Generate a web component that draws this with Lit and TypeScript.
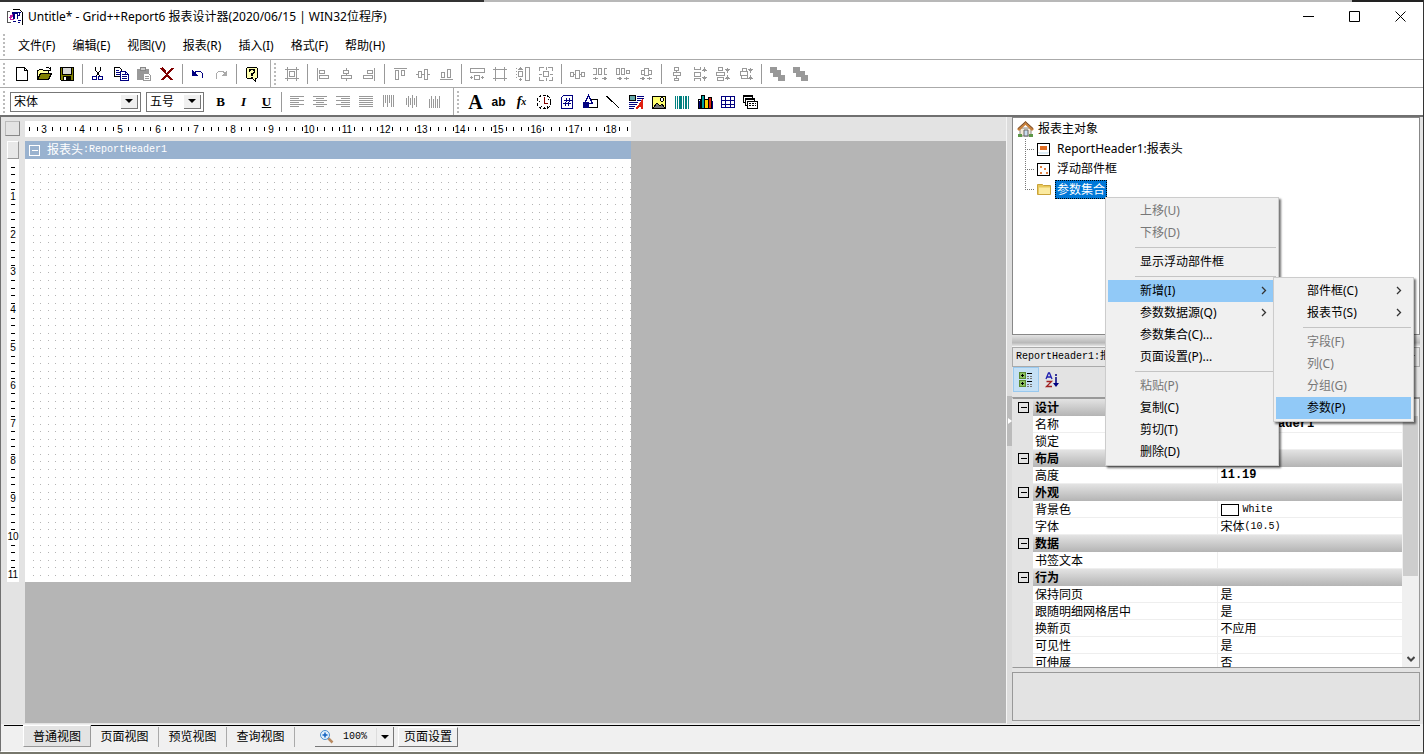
import { LitElement, html, svg, css, nothing } from "lit";
import type { SVGTemplateResult } from "lit";
import { customElement } from "lit/decorators.js";
import { classMap } from "lit/directives/class-map.js";

const CM = 37.8;
const STEP = CM / 5;
const PAGE_W = 606;
const PAGE_H = 423;
const RULER_START = 2.485;

const GREY = "#999";

/* ---------- toolbar glyphs, drawn on a 16 x 16 grid ---------- */

const strokes = (d: string, color = GREY, width = 1) =>
  svg`<path d=${d} fill="none" stroke=${color} stroke-width=${width} />`;
const solid = (d: string, color = GREY) => svg`<path d=${d} fill=${color} />`;

const glyphs: Record<string, SVGTemplateResult> = {
  new: svg`<path d="M3.5 1.5h8l3 3v10h-11z" fill="#fff" stroke="#000"/><path d="M11.5 1.5v3h3" fill="none" stroke="#000"/>`,
  open: svg`<path d="M1.5 13.5v-9h1l1-1h3l1 1h5v3" fill="#ffffa0" stroke="#000"/><path d="M1.5 13.5l3-6h11l-3 6z" fill="#808000" stroke="#000"/><path d="M9.5 2.5q2-2 4 0l1 1M14.5 1v3h-3" fill="none" stroke="#000"/>`,
  save: svg`<path d="M1.5 1.5h13v13h-12l-1-1z" fill="#808000" stroke="#000"/><path d="M4 2h8v6H4z" fill="#d8d8d8"/><path d="M4 10h8v4H4z" fill="#000"/><path d="M5 11h2v3H5z" fill="#fff"/><path d="M3.5 2v6h9V2" fill="none" stroke="#000"/>`,
  cut: svg`<path d="M5.5 1v3l4 6M10.5 1v3l-4 6" fill="none" stroke="#000"/><circle cx="4.500" cy="12" r="2" fill="none" stroke="#000080"/><circle cx="10.500" cy="12" r="2" fill="none" stroke="#000080"/>`,
  copy: svg`<path d="M1.500 1.500h5l2 2v7h-7z" fill="#fff" stroke="#000"/><path d="M3 4.500h3M3 6.500h4M3 8.500h4" stroke="#000080"/><path d="M7.500 5.500h5l3 3v6h-8z" fill="#fff" stroke="#000080"/><path d="M9 8.500h3M9 10.500h5M9 12.500h5M12.500 5.500v3h3" fill="none" stroke="#000080"/>`,
  paste: svg`<path d="M1 3h12v11H1z" fill="#999"/><path d="M4.500 1.500h5v3h-5z" fill="#ccc" stroke="#888"/><path d="M7.500 7.500h5l2 2v5h-7z" fill="#fff" stroke="#999"/><path d="M9 10.500h4M9 12.500h4" stroke="#999"/>`,
  del: svg`<path d="M2 2l11 12M14 2L3 14M3 2l4 4" fill="none" stroke="#800000" stroke-width="2"/>`,
  undo: svg`<path d="M3.500 8.500q2-4 6-3q5 1 2.500 7" fill="none" stroke="#000080"/><path d="M2 4v6h6z" fill="#000080"/>`,
  redo: svg`<path d="M12.500 8.500q-2-4-6-3q-5 1-2.500 7" fill="none" stroke="#aaa"/><path d="M14 4v6h-6z" fill="#aaa"/>`,
  help: svg`<path d="M2.500 2.500l1-1h9l1 1v9l-1 1h-1v3l-3-3h-5l-1-1z" fill="#ffffb0" stroke="#000"/><path d="M5.500 6V4.500l1-1h3l1 1V6L8 8v1.500" fill="none" stroke="#000" stroke-width="1.600"/><path d="M7 10.500h2v1.500H7z"/>`,
  gridAlign: svg`${strokes("M1 3.500h14M1 12.500h14M3.500 1v14M12.500 1v14")}${strokes("M5.500 5.500h5v5h-5z")}`,
  left: strokes("M2.500 2v13M4.500 4.500h5v3h-5zM4.500 9.500h9v3h-9z"),
  centre: strokes("M8.500 2v2M8.500 8v2M8.500 13v2M5.500 4.500h5v3h-5zM3.500 9.500h10v3h-10z"),
  right: strokes("M13.500 2v13M6.500 4.500h5v3h-5zM2.500 9.500h9v3h-9z"),
  top: strokes("M2 2.500h13M3.500 4.500h3v9h-3zM9.500 4.500h3v5h-3z"),
  middle: strokes("M1 8.500h2M7 8.500h2M13 8.500h2M3.500 5.500h3v6h-3zM9.500 3.500h3v10h-3z"),
  bottom: strokes("M2 13.500h13M3.500 6.500h3v5h-3zM9.500 3.500h3v8h-3z"),
  sameW: svg`${strokes("M1.500 2.500h14v4h-14zM5.500 9.500h5v4h-5zM1 11.500h3M12 11.500h3")}${solid("M1 11.500l2-2v4zM15 11.500l-2-2v4z")}`,
  sameBoth: strokes("M3.500 3.500h9v9h-9zM1 3.500h2M13 3.500h2M1 12.500h2M13 12.500h2M3.500 1v2M12.500 1v2M3.500 13v2M12.500 13v2"),
  sameH: svg`${strokes("M10.500 1.500h4v13h-4zM3.500 5.500h4v5h-4zM5.500 1v3M5.500 12v3")}${strokes("M1.500 2v1M1.500 5v1M1.500 8v1M1.500 11v1")}${solid("M3 3.500h5l-2.500-2zM3 12.500h5l-2.500 2z")}`,
  sameGrid: strokes("M5.500 5.500h5v5h-5zM1.500 5v-3.500h4M10 1.500h4.500v3.500M14.500 11v3.500h-4M6 14.500H1.500V11M8.500 1v3M8.500 12v3M1 8.500h3M12 8.500h3"),
  hEqual: strokes("M1.500 6.500h3v4h-3zM6.500 4.500h4v8h-4zM12.500 6.500h3v4h-3zM5 8.500h1M11 8.500h1"),
  hMore: svg`${strokes("M1 2.500h3v6H1M6.500 2.500h3v6h-3zM15 2.500h-3v6h3M2 12.500h4M10 12.500h4")}${solid("M1 12.500l3-2v4zM15 12.500l-3-2v4z")}`,
  hLess: svg`${strokes("M1.500 2.500h3v6h-3zM6.500 2.500h3v6h-3zM11.500 4.500h3v3h-3zM2 12.500h3M11 12.500h3")}${solid("M7 12.500l-3-2v4zM9 12.500l3-2v4z")}`,
  hNone: svg`${strokes("M3.500 4.500h3v4h-3zM6.500 2.500h4v7h-4zM10.500 4.500h3v4h-3zM2 12.500h3M11 12.500h3")}${solid("M7 12.500l-3-2v4zM9 12.500l3-2v4z")}`,
  vEqual: strokes("M5.500 1.500h4v3h-4zM4.500 6.500h7v3h-7zM5.500 12.500h4v2h-4zM7.500 5v1M7.500 10v2"),
  vMore: svg`${strokes("M2.500 1v2.500h6V1M2.500 6.500h6v4h-6zM2.500 15v-2.500h6V15M12.500 2v4M12.500 10v4")}${solid("M10 5h5l-2.500-4zM10 11h5l-2.500 4z")}`,
  vLess: svg`${strokes("M3.500 1.500h4v3h-4zM1.500 6.500h8v3h-8zM2.500 11.500h6v3h-6zM12.500 2v4M12.500 10v4")}${solid("M10 3h5l-2.500 4zM10 13h5l-2.500-4z")}`,
  vNone: svg`${strokes("M4.500 2.500h4v3h-4zM2.500 5.500h7v4h-7zM3.500 9.500h6v3h-6zM12.500 2v4M12.500 10v4")}${solid("M10 3h5l-2.500 4zM10 13h5l-2.500-4z")}`,
  front: svg`${solid("M1 1h7v6H1zM4 4h8v7H4zM9 9h7v6H9z")}`,
  back: svg`${solid("M1 1h7v6H1zM4 5h9v6H4zM9 9h7v6H9z")}`,
  tLeft: strokes("M1 2.500h14M1 4.500h9M1 6.500h14M1 8.500h9M1 10.500h14M1 12.500h9"),
  tCentre: strokes("M1 2.500h14M4 4.500h8M1 6.500h14M4 8.500h8M1 10.500h14M4 12.500h8"),
  tRight: strokes("M1 2.500h14M6 4.500h9M1 6.500h14M6 8.500h9M1 10.500h14M6 12.500h9"),
  tFull: strokes("M1 2.500h14M1 4.500h14M1 6.500h14M1 8.500h14M1 10.500h14M1 12.500h14"),
  vTop: strokes("M2.500 1v12M4.500 1v8M6.500 1v12M8.500 1v8M10.500 1v12M12.500 1v12"),
  vMiddle: strokes("M2.500 4v7M4.500 2v11M6.500 4v7M8.500 1v13M10.500 4v7M12.500 2v11"),
  vBottom: strokes("M2.500 5v9M4.500 2v12M6.500 5v9M8.500 2v12M10.500 5v9M12.500 2v12"),
  clock: svg`<circle cx="8" cy="8" r="7" fill="#fff" stroke="#000" stroke-dasharray="3 1.500"/><path d="M8 3v6h4" fill="none" stroke="#800000"/><path d="M3 7.500h1M12 5h1M8 13v1M4.500 12h1M11 12h1" stroke="#000"/>`,
  hash: svg`<path d="M4.500 1.500h9v13h-11v-11z" fill="#fff" stroke="#000080"/><path d="M6.500 12l1-8M9.500 12l1-8M4.500 6.500h8M4 9.500h8" stroke="#000080"/>`,
  shape: svg`<path d="M6.500 5.500h9v8h-9z" fill="#fff" stroke="#000"/><path d="M6.500 1.500l4 8h-8z" fill="#fff" stroke="#000080"/><circle cx="4" cy="11" r="3.500" fill="#000080"/>`,
  line: svg`<path d="M1.500 2l13 12.500" stroke="#000"/>`,
  rich: svg`<path d="M1.500 1.500h6v5h-6z" fill="#6aa" stroke="#000"/><path d="M9 2.500h7M9 4.500h7M9 6.500h5M1 8.500h9M1 10.500h8M1 12.500h6M1 14.500h5" stroke="#000080"/><path d="M8.500 15l5.500-8v8M10.500 12h4" fill="none" stroke="#e02010" stroke-width="1.700"/>`,
  picture: svg`<path d="M1.500 2.500h13v12h-13z" fill="#ffff70" stroke="#000"/><path d="M2 14l4-5 3 3 2-2 3 4z" fill="#777" stroke="#000"/><circle cx="11" cy="5.500" r="1.800" fill="#fff" stroke="#000"/>`,
  barcode: svg`<path d="M1.500 2v13M3.500 2v13M9.500 2v13M14.500 2v13" stroke="#008080" stroke-width="1"/><path d="M5 2h3v13H5zM11 2h2v13h-2z" fill="#008080"/>`,
  chart: svg`<path d="M1.500 5.500h2v9h-2z" fill="#fff" stroke="#000"/><path d="M4.500 1.500h3v13h-3z" fill="#00a0a0" stroke="#000"/><path d="M7.500 5.500h4v9h-4z" fill="#ffd400" stroke="#000"/><path d="M11.500 3.500h3v11h-3z" fill="#e02010" stroke="#000"/><path d="M15.500 7v8M2.500 7v7" stroke="#000080"/>`,
  table: svg`<path d="M1.500 2.500h13v11h-13zM1.500 6.500h13M1.500 10.500h13M5.500 2.500v11M10.500 2.500v11" fill="none" stroke="#000080"/>`,
  sub: svg`<path d="M.5 1.500h9v7h-9z" fill="#fff" stroke="#000"/><path d="M0 2.500h10" stroke="#000"/><path d="M2.500 4.500h9v7h-9z" fill="#fff" stroke="#000"/><path d="M2 5.500h10" stroke="#000"/><path d="M4.500 7.500h10v7h-10z" fill="#fff" stroke="#000"/><path d="M6 9.500h2M9 9.500h2M12 9.500h1M6 11.500h2M9 11.500h2M12 11.500h1" stroke="#000"/>`,
};

type Tool = [glyph: string, label: string] | "|";

const standardTools: Tool[] = [
  ["new", "新建"], ["open", "打开"], ["save", "保存"], "|",
  ["cut", "剪切"], ["copy", "复制"], ["paste", "粘贴"], ["del", "删除"], "|",
  ["undo", "撤销"], ["redo", "重做"], "|", ["help", "帮助"],
];
const layoutTools: Tool[] = [
  ["gridAlign", "对齐到网格"], "|",
  ["left", "左对齐"], ["centre", "水平居中"], ["right", "右对齐"], "|",
  ["top", "顶端对齐"], ["middle", "垂直居中"], ["bottom", "底端对齐"], "|",
  ["sameW", "等宽"], ["sameBoth", "等大小"], ["sameH", "等高"], ["sameGrid", "按网格调整"], "|",
  ["hEqual", "水平等间距"], ["hMore", "增加水平间距"], ["hLess", "减少水平间距"], ["hNone", "移除水平间距"], "|",
  ["vEqual", "垂直等间距"], ["vMore", "增加垂直间距"], ["vLess", "减少垂直间距"], ["vNone", "移除垂直间距"], "|",
  ["front", "置于顶层"], ["back", "置于底层"],
];
const textTools: Tool[] = [
  ["tLeft", "文字居左"], ["tCentre", "文字居中"], ["tRight", "文字居右"], ["tFull", "两端对齐"],
  ["vTop", "靠上"], ["vMiddle", "居中"], ["vBottom", "靠下"],
];
const insertTools: Tool[] = [
  ["clock", "系统变量"], ["hash", "统计框"], ["shape", "图形"], ["line", "线段"], ["rich", "RTF"],
  ["picture", "图像"], ["barcode", "条码"], ["chart", "图表"], ["table", "表格"], ["sub", "子报表"],
];

interface MenuItem {
  text: string;
  off?: boolean;
  active?: boolean;
  children?: (MenuItem | null)[];
  arrow?: boolean;
}

const contextMenu: (MenuItem | null)[] = [
  { text: "上移(U)", off: true },
  { text: "下移(D)", off: true },
  null,
  { text: "显示浮动部件框" },
  null,
  {
    text: "新增(I)", active: true, arrow: true,
    children: [
      { text: "部件框(C)", arrow: true },
      { text: "报表节(S)", arrow: true },
      null,
      { text: "字段(F)", off: true },
      { text: "列(C)", off: true },
      { text: "分组(G)", off: true },
      { text: "参数(P)", active: true },
    ],
  },
  { text: "参数数据源(Q)", arrow: true },
  { text: "参数集合(C)..." },
  { text: "页面设置(P)..." },
  null,
  { text: "粘贴(P)", off: true },
  { text: "复制(C)" },
  { text: "剪切(T)" },
  { text: "删除(D)" },
];

type Prop = { name: string; value: string; latin?: string; bold?: boolean; swatch?: boolean };
const groups: { title: string; rows: Prop[] }[] = [
  { title: "设计", rows: [{ name: "名称", value: "", latin: "ReportHeader1", bold: true }, { name: "锁定", value: "否" }] },
  { title: "布局", rows: [{ name: "高度", value: "", latin: "11.19", bold: true }] },
  { title: "外观", rows: [{ name: "背景色", value: "", latin: "White", swatch: true }, { name: "字体", value: "宋体", latin: "(10.5)" }] },
  { title: "数据", rows: [{ name: "书签文本", value: "" }] },
  {
    title: "行为",
    rows: [
      { name: "保持同页", value: "是" },
      { name: "跟随明细网格居中", value: "是" },
      { name: "换新页", value: "不应用" },
      { name: "可见性", value: "是" },
      { name: "可伸展", value: "否" },
    ],
  },
];

function dotGrid(): string {
  let d = "";
  for (let y = STEP; y < PAGE_H; y += STEP)
    for (let x = STEP; x < PAGE_W; x += STEP) d += `M${Math.round(x)} ${Math.round(y)}h1v1h-1z`;
  return d;
}

@customElement("app-root")
export class AppRoot extends LitElement {
  static styles = css`
    :host {
      display: flex;
      flex-direction: column;
      box-sizing: border-box;
      height: 100vh;
      overflow: hidden;
      border-right: 1px solid #333;
      border-bottom: 2px solid #77776c;
      background: #fff;
      color: #000;
      font: 12px/16px "Noto Sans", "Noto Sans CJK SC", sans-serif;
    }
    * { box-sizing: border-box; }
    button, select { font: inherit; color: inherit; margin: 0; padding: 0; border: 0; border-radius: 0; background: none; }
    ul { list-style: none; margin: 0; padding: 0; }
    svg { display: block; flex: none; }
    .mono { font-family: "Liberation Mono", "Noto Sans CJK SC", monospace; font-size: 10px; }

    .behind { flex: none; height: 2px; background: linear-gradient(90deg, #333 34%, #b8b8b8 34%, #b8b8b8 95%, #222 95%); }
    .titlebar { flex: none; display: flex; align-items: center; height: 29px; padding-left: 7px; }
    .titlebar h1 { flex: 1; margin: 0 0 0 5px; font-size: 12px; font-weight: 400; white-space: pre; }
    .winbtn { display: grid; place-items: center; width: 46px; height: 29px; }
    .menubar { flex: none; display: flex; align-items: center; gap: 17px; height: 29px; padding-left: 3px; border-bottom: 1px solid #aaa; }
    .menubar button { height: 22px; padding-top: 2px; white-space: nowrap; }
    .menubar .grip { margin-right: -4px; }
    .grip { flex: none; width: 2px; height: 22px; background: repeating-linear-gradient(#bbb 0 2px, #fff 2px 4px); }

    .toolrow { flex: none; display: flex; align-items: stretch; height: 28px; border-bottom: 1px solid #aaa; }
    .toolrow.last { height: 29px; border-bottom: 2px solid #707070; }
    .bar { display: flex; align-items: center; padding-right: 6px; border-right: 1px solid #aaa; }
    .bar.open { border: 0; }
    .bar .grip { margin: 0 5px 0 3px; }
    .tool { display: flex; align-items: center; justify-content: center; width: 23px; height: 24px; flex: none; }
    .tool svg { margin-right: 1px; }
    .sep { width: 8px; height: 20px; flex: none; padding-left: 3px; }
    .sep::before { content: ""; display: block; width: 1px; height: 100%; background: #999; }
    .strong { font: 700 13px/20px "Liberation Serif", serif; }
    .it { font-style: italic; }
    .un { text-decoration: underline; }
    .bigA { font: 700 20px/20px "Liberation Serif", serif; }
    .ab { font: 700 12px/20px "Liberation Sans", sans-serif; }
    .fx { font: italic 700 14px/20px "Liberation Serif", serif; }
    .fx small { font-size: 10px; }

    .combo { display: flex; height: 20px; margin-right: 5px; padding: 2px; border: 1px solid #777; background: #fff; }
    .combo select { appearance: none; flex: 1; min-width: 0; padding-left: 1px; font-size: 12px; line-height: 14px; outline: none; }
    .combo .drop { display: grid; place-items: center; width: 17px; background: #f0f0f0; border-right: 1px solid #777; border-bottom: 1px solid #777; }
    .font { width: 131px; }
    .size { width: 58px; }

    .work { flex: 1; min-height: 0; display: flex; border-left: 1px solid #707070; background: #e3e3e3; }
    .designer { flex: 1; min-width: 0; display: grid; grid-template: 24px 1fr / 24px 1fr; padding-bottom: 1px; }
    .corner { width: 15px; height: 15px; margin: 4px 0 0 4px; border: 1px solid; border-color: #bbb #888 #888 #bbb; background: #e3e3e3; }
    .hruler { margin-top: 4px; background: #fff; }
    .vcol { padding-left: 6px; }
    .mark { height: 18px; width: 12px; border: 1px solid; border-color: #fff #999 #999 #fff; background: #e8e8e8; }
    .vruler { background: #fff; }
    .ruler text { font: 10px "Liberation Sans", sans-serif; text-anchor: middle; }
    .canvas { background: #b5b5b5; overflow: hidden; }
    .section { width: 606px; background: #fff; }
    .sechead { display: flex; align-items: center; height: 18px; padding-left: 4px; background: #99b2cf; color: #fff; white-space: pre; }
    .sechead svg { margin-right: 7px; }
    .sechead .mono { line-height: 18px; }

    .splitter { flex: none; display: flex; align-items: center; width: 6px; border-left: 1px solid #f4f4f4; background: #ddd; }
    .handle { width: 5px; height: 50px; background: #bbb; display: grid; place-items: center; }
    .side { flex: none; width: 408px; margin-right: 3px; display: flex; flex-direction: column; }
    .tree { position: relative; flex: none; height: 218px; padding: 1px 0 0 4px; border: 1px solid #888; background: #fff; }
    .node { display: flex; align-items: center; height: 20px; }
    .node a { color: inherit; text-decoration: none; margin-left: 4px; white-space: nowrap; }
    .node .leaf { margin-left: 7px; }
    .branch { margin-left: 8px; }
    .anchor { position: relative; margin-left: 4px; display: flex; }
    .anchor .picked { display: block; height: 19px; margin: 0; line-height: 17px; padding: 0 1px; border: 1px dotted #000; background: #0078d7; color: #fff; }

    .menu { position: absolute; z-index: 2; border: 1px solid #ccc; padding: 2px; background: #f0f0f0; color: #000; box-shadow: 2px 2px 2px rgba(0, 0, 0, 0.55); }
    .root { left: 50px; top: 17px; width: 174px; }
    .nested { left: 165px; top: -3px; width: 141px; z-index: 3; }
    .menu li { position: relative; }
    .item { display: flex; align-items: center; justify-content: space-between; width: 100%; height: 22px; padding: 0 8px 0 32px; text-align: left; white-space: nowrap; }
    .nested .item { padding: 0 8px 0 31px; }
    .item.off { color: #777; }
    .item.active { background: #91c9f7; }
    .rule { height: 7px; padding: 3px 0 0 27px; }
    .rule::before { content: ""; display: block; height: 1px; background: #c4c4c4; }

    .hsplit { flex: none; height: 12px; border-bottom: 1px solid #f2f2f2; background: linear-gradient(#e3e3e3, #b9b9b9 70%, #e3e3e3); }
    .object { flex: none; display: flex; height: 20px; border: 1px solid #aaa; background: #e6e6e6; }
    .object select { appearance: none; flex: 1; padding-left: 3px; font-size: 10px; outline: none; }
    .object .drop { display: grid; place-items: center; width: 17px; }
    .sortbar { flex: none; display: flex; height: 30px; padding-left: 1px; }
    .sortbar button { display: grid; place-items: center; width: 26px; height: 25px; }
    .sortbar .on { border: 1px solid #99c9ef; background: #c5e0f5; }
    .grid { flex: 1; min-height: 0; display: flex; overflow: hidden; border: 1px solid #999; border-top-width: 2px; border-left-color: #e3e3e3; background: #e3e3e3; }
    .rows { flex: 1; min-width: 0; overflow: hidden; }
    table { width: 100%; border-collapse: separate; border-spacing: 0; table-layout: fixed; }
    tr { height: 17px; }
    td, th { height: 17px; padding: 0 0 0 2px; font-weight: 400; text-align: left; line-height: 17px; white-space: nowrap; }
    td.value { padding-left: 3px; }
    .gutterCol { width: 20px; }
    .gutter { padding: 0 0 0 5px; background: #e3e3e3; }
    .gutter button { display: block; }
    .group { font-weight: 700; background: linear-gradient(#e3e3e3, #b4b4b4); }
    .name { background: #fff; box-shadow: inset -1px -1px #eee; }
    .value { background: #fff; box-shadow: inset 0 -1px #eee; }
    .cell { display: flex; align-items: center; height: 17px; }
    .bold { font-weight: 700; font-size: 12px; }
    .swatch { width: 18px; height: 12px; margin-right: 4px; border: 1px solid #000; background: #fff; }
    .scroll { flex: none; display: flex; flex-direction: column; justify-content: space-between; align-items: center; width: 17px; padding: 17px 1px 5px; background: #f0f0f0; }
    .thumb { width: 15px; height: 160px; background: #cdcdcd; }
    .note { flex: none; height: 49px; margin: 4px 0 3px; border: 1px solid #999; }

    .status { flex: none; display: flex; height: 28px; padding: 1px 3px 0 3px; border-left: 1px solid #707070; border-bottom: 1px solid #fff; background: #f0f0f0; }
    .lead, .tail { border-top: 1px solid #000; }
    .lead { width: 19px; }
    .tail { flex: 1; display: flex; padding-top: 1px; }
    .tab { width: 68px; height: 20px; border-right: 1px solid #aaa; }
    .tab.current { height: 22px; padding-top: 1px; background: #e3e3e3; border: 1px solid; border-color: #fff #999 #999 #fff; }
    .zoom { display: flex; align-items: center; width: 79px; height: 20px; margin: 0 4px 0 20px; padding-left: 4px; border-right: 1px solid #777; border-bottom: 1px solid #777; }
    .zoom select { appearance: none; flex: 1; min-width: 0; padding-left: 9px; font-size: 10px; outline: none; }
    .zoom .drop { display: grid; place-items: center; width: 17px; border-left: 1px solid #ddd; height: 18px; }
    .setup { width: 60px; height: 20px; border: 1px solid; border-color: #fff #777 #777 #fff; }
  `;

  private icon(name: string) {
    return html`<svg width="16" height="16" viewBox="0 0 16 16" shape-rendering="crispEdges" aria-hidden="true">${glyphs[name]}</svg>`;
  }

  private tools(list: Tool[]) {
    return list.map((t) =>
      t === "|"
        ? html`<span class="sep"></span>`
        : html`<button class="tool" aria-label=${t[1]}>${this.icon(t[0])}</button>`
    );
  }

  private caret() {
    return html`<svg width="8" height="4" viewBox="0 0 8 4" aria-hidden="true"><path d="M0 0h8l-4 4z" /></svg>`;
  }

  private box(color: string) {
    return html`<svg width="11" height="11" viewBox="0 0 11 11" shape-rendering="crispEdges" aria-hidden="true">
      <path d="M.5.5h10v10h-10zM2.500 5.500h6" fill="none" stroke=${color} />
    </svg>`;
  }

  private branch(last: boolean) {
    return html`<svg class="branch" width="12" height="20" viewBox="0 0 12 20" shape-rendering="crispEdges" aria-hidden="true">
      <path d=${last ? "M.5 0v11M0 10.500h10" : "M.5 0v20M0 10.500h10"} fill="none" stroke="#777" stroke-dasharray="1 1" />
    </svg>`;
  }

  private menu(items: (MenuItem | null)[], kind: string): unknown {
    return html`<ul class="menu ${kind}" role="menu">
      ${items.map((m) =>
        m === null
          ? html`<li class="rule" role="separator"></li>`
          : html`<li role="none">
              <button role="menuitem" class=${classMap({ item: true, off: !!m.off, active: !!m.active })} ?disabled=${m.off}>
                <span>${m.text}</span>
                ${m.arrow
                  ? html`<svg width="8" height="9" viewBox="0 0 8 9" aria-hidden="true"><path d="M2 1l3.500 3.500L2 8" fill="none" stroke="#333" stroke-width="1.300" /></svg>`
                  : nothing}
              </button>
              ${m.children ? this.menu(m.children, "nested") : nothing}
            </li>`
      )}
    </ul>`;
  }

  private hRuler() {
    const marks: SVGTemplateResult[] = [];
    for (let k = Math.ceil(RULER_START * 5); ; k++) {
      const x = (k / 5 - RULER_START) * CM;
      if (x > PAGE_W - 2) break;
      marks.push(
        k % 5 === 0
          ? svg`<text x=${Math.round(x)} y="12">${k / 5}</text>`
          : svg`<path d="M${Math.round(x)} 6h1v4h-1z" />`
      );
    }
    return html`<svg class="ruler hruler" width=${PAGE_W} height="16">${marks}</svg>`;
  }

  private vRuler() {
    const marks: SVGTemplateResult[] = [];
    for (let k = 1; k * STEP < PAGE_H; k++) {
      const y = Math.round(k * STEP);
      marks.push(k % 5 === 0 ? svg`<text x="6" y=${y + 3}>${k / 5}</text>` : svg`<path d="M4 ${y}h4v1h-4z" />`);
    }
    return html`<svg class="ruler vruler" width="12" height=${PAGE_H}>${marks}</svg>`;
  }

  private propertyGrid() {
    return html`<table aria-label="属性">
      <colgroup><col class="gutterCol" /><col /><col /></colgroup>
      ${groups.map(
        (g) => html`<tbody>
          <tr>
            <td class="gutter"><button aria-label="折叠${g.title}">${this.box("#000")}</button></td>
            <th class="group" colspan="2" scope="rowgroup">${g.title}</th>
          </tr>
          ${g.rows.map(
            (r) => html`<tr>
              <td class="gutter"></td>
              <th class="name" scope="row">${r.name}</th>
              <td class="value">
                <div class="cell">
                  ${r.swatch ? html`<span class="swatch"></span>` : nothing}<span>${r.value}</span>${r.latin
                    ? html`<span class=${classMap({ mono: true, bold: !!r.bold })}>${r.latin}</span>`
                    : nothing}
                </div>
              </td>
            </tr>`
          )}
        </tbody>`
      )}
    </table>`;
  }

  render() {
    return html`
      <div class="behind"></div>
      <header class="titlebar">
        <svg width="16" height="16" viewBox="0 0 16 16" shape-rendering="crispEdges" aria-hidden="true">
          <path d="M3 2.500H.5v11H4" fill="none" stroke="#555" />
          <path d="M5.500.5h7l3 3v12" fill="none" stroke="#000" />
          <path d="M5 3h5v2H8v5H6V5H5zM10 3h4v1h-3v2h2v1h-2v3h-1z" fill="#000080" />
          <path d="M2 8l4-3v2l-3 3zM3 6h1v5H3zM4 10h3v1H4z" fill="#c020a0" />
          <path d="M6 12.500h3M11 11.500h3M11 13.500h2M12.500 4v2" fill="none" stroke="#000080" />
        </svg>
        <h1>Untitle* - Grid++Report6 报表设计器(2020/06/15 | WIN32位程序)</h1>
        <button class="winbtn" aria-label="最小化"><svg width="11" height="11"><path d="M0 5.500h11" stroke="#000" /></svg></button>
        <button class="winbtn" aria-label="最大化"><svg width="11" height="11"><path d="M.5.5h10v10h-10z" fill="none" stroke="#000" /></svg></button>
        <button class="winbtn" aria-label="关闭"><svg width="11" height="11"><path d="M.5.5l10 10M10.500.5l-10 10" stroke="#000" /></svg></button>
      </header>

      <nav class="menubar">
        <span class="grip"></span>
        ${["文件(F)", "编辑(E)", "视图(V)", "报表(R)", "插入(I)", "格式(F)", "帮助(H)"].map((m) => html`<button>${m}</button>`)}
      </nav>

      <div class="toolrow">
        <div class="bar"><span class="grip"></span>${this.tools(standardTools)}</div>
        <div class="bar open"><span class="grip"></span>${this.tools(layoutTools)}</div>
      </div>
      <div class="toolrow last">
        <div class="bar">
          <span class="grip"></span>
          <div class="combo font">
            <select aria-label="字体"><option>宋体</option></select>
            <span class="drop">${this.caret()}</span>
          </div>
          <div class="combo size">
            <select aria-label="字号"><option>五号</option></select>
            <span class="drop">${this.caret()}</span>
          </div>
          <button class="tool strong">B</button>
          <button class="tool strong it">I</button>
          <button class="tool strong un">U</button>
          <span class="sep"></span>
          ${this.tools(textTools)}
        </div>
        <div class="bar open">
          <span class="grip"></span>
          <button class="tool bigA">A</button>
          <button class="tool ab">ab</button>
          <button class="tool fx">f<small>x</small></button>
          ${this.tools(insertTools)}
        </div>
      </div>

      <main class="work">
        <section class="designer">
          <div class="corner"></div>
          ${this.hRuler()}
          <div class="vcol">
            <div class="mark"></div>
            ${this.vRuler()}
          </div>
          <div class="canvas">
            <div class="section">
              <div class="sechead">${this.box("#fff")}<span>报表头</span><span class="mono">:ReportHeader1</span></div>
              <svg width=${PAGE_W} height=${PAGE_H} shape-rendering="crispEdges" aria-hidden="true">
                <path d=${dotGrid()} fill="#b4b4b4" />
              </svg>
            </div>
          </div>
        </section>

        <div class="splitter">
          <div class="handle"><svg width="4" height="6"><path d="M0 0l4 3-4 3z" fill="#fff" /></svg></div>
        </div>

        <aside class="side">
          <ul class="tree">
            <li class="node">
              <svg width="17" height="16" viewBox="0 0 17 16" aria-hidden="true">
                <path d="M3 7h11v8H3z" fill="#f4ead8" stroke="#888" />
                <path d="M1 9l7.500-7L16 9" fill="none" stroke="#c8803a" stroke-width="3" />
                <path d="M1 7.500L8.500.8 16 7.500" fill="none" stroke="#70503a" />
                <path d="M7 9h4v6H7z" fill="#c9dcf0" stroke="#666" />
                <path d="M1 13h4v3H1zM12 13h4v3h-4z" fill="#5d9848" />
              </svg>
              <a href="#report">报表主对象</a>
            </li>
            <li class="node">
              ${this.branch(false)}
              <svg width="13" height="13" viewBox="0 0 13 13" shape-rendering="crispEdges" aria-hidden="true">
                <path d="M.5.5h12v12H.5z" fill="#fff" stroke="#000" /><path d="M3 3h7v4H3z" fill="#e06c20" /><path d="M1 9h11M2 10.500h9" stroke="#ddecf5" />
              </svg>
              <a class="leaf" href="#header">ReportHeader1:报表头</a>
            </li>
            <li class="node">
              ${this.branch(false)}
              <svg width="13" height="13" viewBox="0 0 13 13" shape-rendering="crispEdges" aria-hidden="true">
                <path d="M.5.5h12v12H.5z" fill="#fff" stroke="#000" /><path d="M3 3h2v2H3zM7 5h2v2H7zM3 9h2v2H3zM9 9h2v2H9z" fill="#e08040" />
              </svg>
              <a class="leaf" href="#floating">浮动部件框</a>
            </li>
            <li class="node">
              ${this.branch(true)}
              <svg width="14" height="12" viewBox="0 0 14 12" aria-hidden="true">
                <path d="M.5 1.500h5l1 1h7v9H.5z" fill="#e8c85a" stroke="#c9a23a" /><path d="M2 4.500h11v6.500H2z" fill="#fbeaa0" />
              </svg>
              <div class="anchor">
                <a class="picked" href="#params">参数集合</a>
                ${this.menu(contextMenu, "root")}
              </div>
            </li>
          </ul>
          <div class="hsplit"></div>
          <div class="object">
            <select class="mono" aria-label="对象"><option>ReportHeader1:报表头</option></select>
            <span class="drop">${this.caret()}</span>
          </div>
          <div class="sortbar">
            <button class="on" aria-label="按分类">
              <svg width="16" height="16" viewBox="0 0 16 16" shape-rendering="crispEdges" aria-hidden="true">
                <path d="M1.500.5h6v6h-6zM1.500 8.500h6v6h-6z" fill="#8cc060" stroke="#5a8a30" />
                <path d="M3 3.500h3M4.500 2v3M3 11.500h3M4.500 10v3" stroke="#000" />
                <path d="M9 1.500h5M9 9.500h5" stroke="#000" /><path d="M9 4.500h2M12 4.500h2M9 6.500h2M12 6.500h2M9 12.500h2M12 12.500h2M9 14.500h2M12 14.500h2" stroke="#777" />
              </svg>
            </button>
            <button aria-label="按字母">
              <svg width="16" height="16" viewBox="0 0 16 16" aria-hidden="true">
                <path d="M2 7l2.500-6h1L8 7M3 5h4" fill="none" stroke="#2020b0" stroke-width="1.300" />
                <path d="M2.500 9.500h5l-5 5h5.500" fill="none" stroke="#a02020" stroke-width="1.300" />
                <path d="M12 2v2M12 5v7" stroke="#000080" stroke-width="1.500" /><path d="M9 11h6l-3 4z" fill="#000080" />
              </svg>
            </button>
          </div>
          <div class="grid">
            <div class="rows">${this.propertyGrid()}</div>
            <div class="scroll">
              <span class="thumb"></span>
              <svg width="8" height="6" aria-hidden="true"><path d="M.5 1L4 4.500 7.500 1" fill="none" stroke="#444" stroke-width="2" /></svg>
            </div>
          </div>
          <div class="note"></div>
        </aside>
      </main>

      <footer class="status">
        <span class="lead"></span>
        <button class="tab current">普通视图</button>
        <div class="tail">
          <button class="tab">页面视图</button>
          <button class="tab">预览视图</button>
          <button class="tab">查询视图</button>
          <div class="zoom">
            <svg width="15" height="15" viewBox="0 0 15 15" aria-hidden="true">
              <path d="M9 9l4.500 4.500" stroke="#b98a60" stroke-width="2.500" />
              <circle cx="6" cy="6" r="4.500" fill="#e2f0fc" stroke="#4a90d0" /><path d="M6 3.500v5M3.500 6h5" stroke="#1060c0" stroke-width="1.500" />
            </svg>
            <select class="mono" aria-label="缩放"><option>100%</option></select>
            <span class="drop">${this.caret()}</span>
          </div>
          <button class="setup">页面设置</button>
        </div>
      </footer>
    `;
  }
}
